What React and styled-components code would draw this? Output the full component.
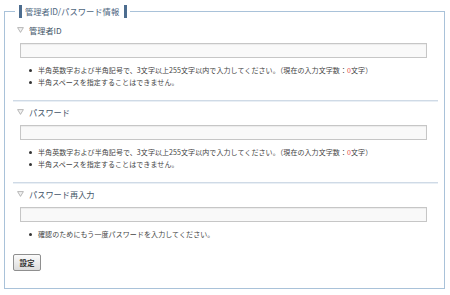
import React from "react";
import styled, { createGlobalStyle } from "styled-components";

const GlobalStyle = createGlobalStyle`
  html, body {
    margin: 0;
    padding: 0;
    background: #ffffff;
  }
  body {
    font-family: "Noto Sans CJK JP", "Noto Sans", sans-serif;
    color: #333333;
  }
`;

const Fieldset = styled.fieldset`
  margin: 5px 5px 0 4px;
  padding: 0 0 17px 0;
  border: 1px solid #a9c2d9;
  min-width: 0;
`;

const Legend = styled.legend`
  display: flex;
  align-items: stretch;
  margin-left: 10px;
  padding: 0 3px 0 4px;
  font-size: 8px;
  line-height: 13px;
`;

const LegendLabel = styled.span`
  display: block;
  height: 13px;
  line-height: 13px;
  padding: 0 5px 0 3px;
  border-left: 3px solid #4d6d8f;
  border-right: 3px solid #4d6d8f;
  font-size: 8.3px;
  color: #4e6680;
  white-space: nowrap;
`;

const Section = styled.div`
  padding: ${(p) => (p.$first ? "6px" : "4px")} 17px 0 12px;
`;

const Title = styled.div`
  display: flex;
  align-items: center;
  height: 12px;
  margin-bottom: 7px;
  font-size: 8.2px;
  line-height: 12px;
  color: #435568;
`;

const Triangle = styled.svg`
  width: 7px;
  height: 6px;
  margin-right: 5px;
  flex: none;
`;

const TextInput = styled.input`
  display: block;
  box-sizing: border-box;
  width: calc(100% - 3px);
  height: 15px;
  margin: 0 0 6px 3px;
  padding: 0 3px;
  border: 1px solid #c6c6c6;
  background: #f9f9f9;
  box-shadow: inset 0 1px 1px rgba(0, 0, 0, 0.06);
  font-size: 8px;
  outline: none;
`;

const NoteList = styled.ul`
  list-style: none;
  margin: 0;
  padding: 0;
`;

const NoteItem = styled.li`
  display: flex;
  align-items: center;
  height: 12px;
  padding-left: 12px;
  font-size: 7px;
  line-height: 12px;
  letter-spacing: 0.08px;
  color: #444444;
  white-space: nowrap;
`;

const Dot = styled.span`
  width: 3px;
  height: 3px;
  border-radius: 50%;
  background: #333333;
  margin-right: 6px;
  flex: none;
`;

const Count = styled.span`
  color: #e5433b;
`;

const Divider = styled.div`
  margin: 12px 6px 0 8px;
  height: 0;
  border-top: 1px solid #cfdae6;
  border-bottom: 1px solid #e9eff5;
`;

const Footer = styled.div`
  display: flex;
  padding: 14px 0 0 8px;
`;

const SubmitButton = styled.button`
  box-sizing: border-box;
  width: 28px;
  height: 17px;
  padding: 0;
  border: 1px solid #8f8f8f;
  border-radius: 2px;
  background: linear-gradient(#fbfbfb, #dcdcdc);
  font-family: "Noto Sans CJK JP", sans-serif;
  font-size: 7.5px;
  font-weight: bold;
  color: #333333;
  line-height: 15px;
`;

const Tri = () => (
  <Triangle viewBox="0 0 7 6">
    <polygon points="0.6,0.6 6.4,0.6 3.5,5.4" fill="#f2f2f2" stroke="#b0b0b0" strokeWidth="0.9" />
  </Triangle>
);

const lengthNote = "半角英数字および半角記号で、3文字以上255文字以内で入力してください。";

export default function App() {
  return (
    <>
      <GlobalStyle />
      <Fieldset>
        <Legend>
          <LegendLabel>管理者ID/パスワード情報</LegendLabel>
        </Legend>

        <Section $first>
          <Title>
            <Tri />
            管理者ID
          </Title>
          <TextInput type="text" />
          <NoteList>
            <NoteItem>
              <Dot />
              {lengthNote}（現在の入力文字数：<Count>0</Count>文字）
            </NoteItem>
            <NoteItem>
              <Dot />
              半角スペースを指定することはできません。
            </NoteItem>
          </NoteList>
        </Section>
        <Divider />

        <Section>
          <Title>
            <Tri />
            パスワード
          </Title>
          <TextInput type="password" />
          <NoteList>
            <NoteItem>
              <Dot />
              {lengthNote}（現在の入力文字数：<Count>0</Count>文字）
            </NoteItem>
            <NoteItem>
              <Dot />
              半角スペースを指定することはできません。
            </NoteItem>
          </NoteList>
        </Section>
        <Divider />

        <Section>
          <Title>
            <Tri />
            パスワード再入力
          </Title>
          <TextInput type="password" />
          <NoteList>
            <NoteItem>
              <Dot />
              確認のためにもう一度パスワードを入力してください。
            </NoteItem>
          </NoteList>
        </Section>

        <Footer>
          <SubmitButton type="button">設定</SubmitButton>
        </Footer>
      </Fieldset>
    </>
  );
}
